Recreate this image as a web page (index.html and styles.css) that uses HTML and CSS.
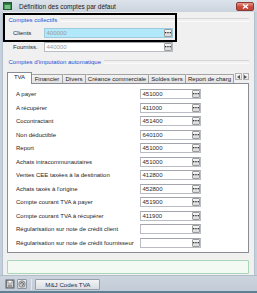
FILE: index.html
```html
<!DOCTYPE html>
<html lang="fr">
<head>
    <meta charset="UTF-8">
    <title>Définition des comptes par défaut</title>
    <link rel="stylesheet" href="styles.css">
</head>
<body>
    <div class="window">
        <div class="titlebar">
            <svg class="app-icon" width="9" height="8" viewBox="0 0 9 8">
                <rect x="0.5" y="0.5" width="8" height="7" fill="#3f9b52" stroke="#24572f"/>
                <rect x="1" y="1" width="7" height="1.5" fill="#2a6b38"/>
                <path d="M2 4h5M2 6h5" stroke="#d8f0dc" stroke-width="0.8"/>
            </svg>
            <span class="title">Définition des comptes par défaut</span>
            <span class="close-btn">
                <svg width="7" height="5" viewBox="0 0 7 5">
                    <path d="M1 0.5l5 4M6 0.5l-5 4" stroke="#fff" stroke-width="1.4"/>
                </svg>
            </span>
        </div>

        <div class="content">
            <div class="group-title">Comptes collectifs</div>
            <div class="field-row">
                <label>Clients</label>
                <div class="input wide current">
                    <span class="value muted">400000</span>
                    <span class="browse"><svg width="6" height="2" viewBox="0 0 6 2"><rect x="0" y="0" width="1.3" height="1.3"/><rect x="2.3" y="0" width="1.3" height="1.3"/><rect x="4.6" y="0" width="1.3" height="1.3"/></svg></span>
                </div>
            </div>
            <div class="field-row">
                <label>Fourniss.</label>
                <div class="input wide">
                    <span class="value muted">440000</span>
                    <span class="browse"><svg width="6" height="2" viewBox="0 0 6 2"><rect x="0" y="0" width="1.3" height="1.3"/><rect x="2.3" y="0" width="1.3" height="1.3"/><rect x="4.6" y="0" width="1.3" height="1.3"/></svg></span>
                </div>
            </div>

            <div class="group-title second">Comptes d'imputation automatique</div>

            <div class="tabs">
                <span class="tab active tab-tva">TVA</span>
                <span class="tab tab-fin">Financier</span>
                <span class="tab tab-div">Divers</span>
                <span class="tab tab-cre">Créance commerciale</span>
                <span class="tab tab-sol">Soldes tiers</span>
                <span class="tab tab-rep">Report de charg</span>
                <span class="tab-arrow"><svg width="3" height="4" viewBox="0 0 3 4"><path d="M3 0v4L0 2z" fill="#555"/></svg></span>
                <span class="tab-arrow"><svg width="3" height="4" viewBox="0 0 3 4"><path d="M0 0v4l3-2z" fill="#555"/></svg></span>
            </div>

            <div class="panel">
                <div class="grid">
                    <label>A payer</label>
                    <div class="input"><span class="value">451000</span><span class="browse"><svg width="6" height="2" viewBox="0 0 6 2"><rect width="1.3" height="1.3"/><rect x="2.3" width="1.3" height="1.3"/><rect x="4.6" width="1.3" height="1.3"/></svg></span></div>
                    <label>A récupérer</label>
                    <div class="input"><span class="value">411000</span><span class="browse"><svg width="6" height="2" viewBox="0 0 6 2"><rect width="1.3" height="1.3"/><rect x="2.3" width="1.3" height="1.3"/><rect x="4.6" width="1.3" height="1.3"/></svg></span></div>
                    <label>Cocontractant</label>
                    <div class="input"><span class="value">451400</span><span class="browse"><svg width="6" height="2" viewBox="0 0 6 2"><rect width="1.3" height="1.3"/><rect x="2.3" width="1.3" height="1.3"/><rect x="4.6" width="1.3" height="1.3"/></svg></span></div>
                    <label>Non déductible</label>
                    <div class="input"><span class="value">640100</span><span class="browse"><svg width="6" height="2" viewBox="0 0 6 2"><rect width="1.3" height="1.3"/><rect x="2.3" width="1.3" height="1.3"/><rect x="4.6" width="1.3" height="1.3"/></svg></span></div>
                    <label>Report</label>
                    <div class="input"><span class="value">451000</span><span class="browse"><svg width="6" height="2" viewBox="0 0 6 2"><rect width="1.3" height="1.3"/><rect x="2.3" width="1.3" height="1.3"/><rect x="4.6" width="1.3" height="1.3"/></svg></span></div>
                    <label>Achats intracommunautaires</label>
                    <div class="input"><span class="value">451000</span><span class="browse"><svg width="6" height="2" viewBox="0 0 6 2"><rect width="1.3" height="1.3"/><rect x="2.3" width="1.3" height="1.3"/><rect x="4.6" width="1.3" height="1.3"/></svg></span></div>
                    <label>Ventes CEE taxées à la destination</label>
                    <div class="input"><span class="value">412800</span><span class="browse"><svg width="6" height="2" viewBox="0 0 6 2"><rect width="1.3" height="1.3"/><rect x="2.3" width="1.3" height="1.3"/><rect x="4.6" width="1.3" height="1.3"/></svg></span></div>
                    <label>Achats taxés à l'origine</label>
                    <div class="input"><span class="value">452800</span><span class="browse"><svg width="6" height="2" viewBox="0 0 6 2"><rect width="1.3" height="1.3"/><rect x="2.3" width="1.3" height="1.3"/><rect x="4.6" width="1.3" height="1.3"/></svg></span></div>
                    <label>Compte courant TVA à payer</label>
                    <div class="input"><span class="value">451900</span><span class="browse"><svg width="6" height="2" viewBox="0 0 6 2"><rect width="1.3" height="1.3"/><rect x="2.3" width="1.3" height="1.3"/><rect x="4.6" width="1.3" height="1.3"/></svg></span></div>
                    <label>Compte courant TVA à récupérer</label>
                    <div class="input"><span class="value">411900</span><span class="browse"><svg width="6" height="2" viewBox="0 0 6 2"><rect width="1.3" height="1.3"/><rect x="2.3" width="1.3" height="1.3"/><rect x="4.6" width="1.3" height="1.3"/></svg></span></div>
                    <label>Régularisation sur note de crédit client</label>
                    <div class="input"><span class="value"></span><span class="browse"><svg width="6" height="2" viewBox="0 0 6 2"><rect width="1.3" height="1.3"/><rect x="2.3" width="1.3" height="1.3"/><rect x="4.6" width="1.3" height="1.3"/></svg></span></div>
                    <label>Régularisation sur note de crédit fournisseur</label>
                    <div class="input"><span class="value"></span><span class="browse"><svg width="6" height="2" viewBox="0 0 6 2"><rect width="1.3" height="1.3"/><rect x="2.3" width="1.3" height="1.3"/><rect x="4.6" width="1.3" height="1.3"/></svg></span></div>
                </div>
            </div>

            <div class="status"></div>
        </div>

        <div class="footer">
            <span class="tool-btn">
                <svg width="8" height="8" viewBox="0 0 8 8">
                    <rect x="0.5" y="0.5" width="7" height="7" fill="#d9d9d9" stroke="#777"/>
                    <rect x="2" y="0.5" width="4" height="2.5" fill="#fff" stroke="#777" stroke-width="0.6"/>
                    <rect x="1.8" y="4.5" width="4.4" height="3" fill="#9a9a9a"/>
                </svg>
            </span>
            <span class="tool-btn">
                <svg width="8" height="8" viewBox="0 0 8 8">
                    <circle cx="4" cy="4" r="3.2" fill="#c8c8c8" stroke="#7a7a7a" stroke-width="0.8"/>
                    <path d="M2.5 4a1.5 1.5 0 1 1 1.5 1.5" fill="none" stroke="#555" stroke-width="0.8"/>
                </svg>
            </span>
            <span class="separator"></span>
            <span class="action-btn">M&amp;J Codes TVA</span>
        </div>

        <div class="highlight"></div>
    </div>
</body>
</html>
```

FILE: styles.css
```css
* {
    box-sizing: border-box;
    margin: 0;
    padding: 0;
}

body {
    width: 257px;
    height: 293px;
    overflow: hidden;
    font-family: "Liberation Sans", Arial, sans-serif;
    font-size: 6px;
    color: #1e1e1e;
    background: #c9d3df;
}

.window {
    position: relative;
    width: 257px;
    height: 293px;
    display: flex;
    flex-direction: column;
    background: #c6d0dc;
}

/* title bar */
.titlebar {
    height: 12px;
    display: flex;
    align-items: center;
    padding: 0 3px 0 3px;
    background: linear-gradient(#dce3eb, #cbd3dd);
}

.app-icon {
    margin-right: 7px;
}

.title {
    flex: 1;
    font-size: 6.5px;
    color: #1a1a1a;
}

.close-btn {
    width: 18px;
    height: 9px;
    display: flex;
    align-items: center;
    justify-content: center;
    border: 1px solid #8d3a32;
    border-radius: 2px;
    background: linear-gradient(#e59a8e, #c9493b 55%, #c0443a);
    margin-top: 1px;
}

/* dialog content */
.content {
    flex: 1;
    margin: 0 2px;
    padding: 4px 5px 1.5px 4px;
    background: #f0f0f0;
    border-left: 1px solid #b5c0cd;
    border-right: 1px solid #b5c0cd;
    display: flex;
    flex-direction: column;
}

.group-title {
    display: flex;
    align-items: center;
    height: 8px;
    padding-left: 1.5px;
    color: #2050d8;
}

.group-title::after {
    content: "";
    flex: 1;
    margin-left: 3px;
    height: 2px;
    border-top: 1px solid #d5d5d5;
    border-bottom: 1px solid #fafafa;
}

.group-title.second {
    margin-top: 6.2px;
}

.field-row {
    display: flex;
    align-items: center;
    height: 10px;
    margin-top: 3.5px;
    padding-left: 6px;
}

.field-row:first-of-type,
.group-title + .field-row {
    margin-top: 4px;
}

.field-row label {
    width: 31px;
}

.input {
    display: flex;
    align-items: center;
    height: 10px;
    background: #fff;
    border: 1px solid #b9bcc2;
    border-top-color: #a2a5ab;
}

.input.wide {
    width: 129px;
}

.input.current {
    background: #b1e8fa;
    border-color: #9ccbe0;
}

.value {
    flex: 1;
    padding-left: 1.5px;
    color: #2a2a2a;
}

.value.muted {
    color: #9a9a9a;
}

.browse {
    width: 8px;
    height: 8px;
    margin-right: 0.5px;
    display: flex;
    align-items: center;
    justify-content: center;
    border: 1px solid #9c9c9c;
    border-radius: 1px;
    background: linear-gradient(#f7f7f7, #dadada);
    fill: #2d2d2d;
}

/* tabs */
.tabs {
    display: flex;
    align-items: flex-end;
    height: 11px;
    margin-top: 6.3px;
    position: relative;
    z-index: 1;
}

.tab {
    height: 9px;
    display: flex;
    align-items: center;
    justify-content: center;
    white-space: nowrap;
    overflow: hidden;
    border: 1px solid #a3a3a3;
    border-left: none;
    border-bottom: none;
    border-radius: 1px 1px 0 0;
    background: linear-gradient(#f3f3f3, #e1e1e1);
    color: #222;
}

.tab.active {
    height: 12px;
    margin-bottom: -1px;
    border-left: 1px solid #898c95;
    border-color: #898c95;
    background: #fff;
    padding-bottom: 2px;
}

.tab-tva { width: 25px; }
.tab-fin { width: 31px; }
.tab-div { width: 23px; }
.tab-cre { width: 63px; }
.tab-sol { width: 37px; }
.tab-rep { width: 48px; justify-content: flex-start; padding-left: 2px; }

.tab-arrow {
    width: 6.5px;
    height: 6.5px;
    margin: 0 0 3px 1px;
    display: flex;
    align-items: center;
    justify-content: center;
    border: 1px solid #b3b3b3;
    background: linear-gradient(#f8f8f8, #e6e6e6);
}

.panel {
    flex: 1;
    background: #fff;
    border: 1px solid #898c95;
    padding: 5.5px 0 0 8px;
}

.grid {
    display: grid;
    grid-template-columns: 124px 61px;
    grid-auto-rows: 10px;
    row-gap: 3.5px;
    align-items: center;
}

.grid label {
    white-space: nowrap;
    color: #1e1e1e;
}

.status {
    height: 13.5px;
    margin-top: 7px;
    border: 1px solid #a7d7b6;
    border-radius: 1px;
    background: #f3faf4;
}

/* bottom toolbar */
.footer {
    height: 18px;
    display: flex;
    align-items: flex-start;
    padding: 3px 0 0 5px;
    background: linear-gradient(#ccd4de, #c2cbd7);
    border-top: 1px solid #b2bdca;
    border-bottom: 2px solid #5d8192;
}

.tool-btn {
    width: 10px;
    height: 10px;
    margin-right: 1.7px;
    display: flex;
    align-items: center;
    justify-content: center;
    border: 1px solid #8e98a4;
    border-radius: 1px;
    background: linear-gradient(#eef0f3, #cfd4da);
}

.separator {
    width: 1px;
    height: 11px;
    margin: 0 3px 0 3px;
    background: #98a3b0;
    border-right: 1px solid #e4e9ef;
}

.action-btn {
    width: 65px;
    height: 11px;
    display: flex;
    align-items: center;
    justify-content: center;
    border: 1px solid #97a1ad;
    border-radius: 1px;
    background: linear-gradient(#f2f3f5, #d9dde2);
    color: #1f2d4a;
    font-size: 6.2px;
}

/* annotation frame drawn over the Clients field */
.highlight {
    position: absolute;
    left: 3px;
    top: 13px;
    width: 174px;
    height: 28.5px;
    border: 2.5px solid #000;
}
```
